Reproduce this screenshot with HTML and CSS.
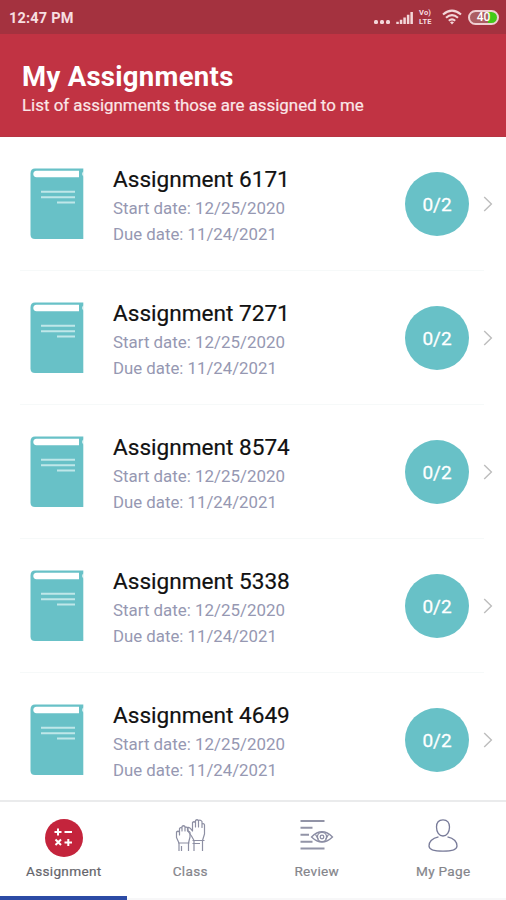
FILE: index.html
```html
<!DOCTYPE html>
<html lang="en">
<head>
<meta charset="utf-8">
<title>My Assignments</title>
<link rel="stylesheet" href="styles.css">
</head>
<body>
<svg class="defs" aria-hidden="true">
  <symbol id="book" viewBox="0 0 54 72">
    <path fill="#68c1c7" d="M5 .5H53.300V71H5Q.5 71 .5 66.500V5.500Q.5 .5 5 .5Z"/>
    <path fill="#fff" d="M6.500 2.800H49V9.300H6.500Q3.300 9 3.300 6T6.500 2.800ZM53.500 3.300V8.700Q51 6 53.500 3.300Z"/>
    <path stroke="#bfe7e9" stroke-width="2" d="M11 23.700H45M11 29.200H45M27 34.600H45"/>
  </symbol>
  <symbol id="chevron" viewBox="0 0 10 16"><path fill="none" stroke="#bdbdbd" stroke-width="1.400" d="M1.200 1 8.400 8 1.200 15"/></symbol>
</svg>
<div class="app">
  <div class="status">
    <span class="clock">12:47 PM</span>
    <span class="dots"><i></i><i></i><i></i></span>
    <svg class="signal" viewBox="0 0 19 14"><path stroke="#f3d7da" stroke-width="2.700" d="M2 14V11.500M5.800 14V9.500M9.600 14V7M13.400 14V4M17.200 14V1"/></svg>
    <span class="lte"><span>Vo)</span><span>LTE</span></span>
    <svg class="wifi" viewBox="0 0 20 16"><g fill="none" stroke="#f3d7da" stroke-width="2.100"><path d="M1 5.500Q10-2.200 19 5.500M4 8.700Q10 3.500 16 8.700M6.800 11.800Q10 9.100 13.200 11.800"/></g><path fill="#f3d7da" d="M8 13.200Q10 12 12 13.200L10 15.500Z"/></svg>
    <span class="battery">40</span>
  </div>
  <header class="header">
    <h1>My Assignments</h1>
    <p>List of assignments those are assigned to me</p>
  </header>
  <ul class="list">
    <li class="row"><svg class="book"><use href="#book"/></svg><div class="info"><h2>Assignment 6171</h2><p class="start">Start date: 12/25/2020</p><p class="due">Due date: 11/24/2021</p></div><span class="count">0/2</span><svg class="chevron"><use href="#chevron"/></svg></li>
    <li class="row"><svg class="book"><use href="#book"/></svg><div class="info"><h2>Assignment 7271</h2><p class="start">Start date: 12/25/2020</p><p class="due">Due date: 11/24/2021</p></div><span class="count">0/2</span><svg class="chevron"><use href="#chevron"/></svg></li>
    <li class="row"><svg class="book"><use href="#book"/></svg><div class="info"><h2>Assignment 8574</h2><p class="start">Start date: 12/25/2020</p><p class="due">Due date: 11/24/2021</p></div><span class="count">0/2</span><svg class="chevron"><use href="#chevron"/></svg></li>
    <li class="row"><svg class="book"><use href="#book"/></svg><div class="info"><h2>Assignment 5338</h2><p class="start">Start date: 12/25/2020</p><p class="due">Due date: 11/24/2021</p></div><span class="count">0/2</span><svg class="chevron"><use href="#chevron"/></svg></li>
    <li class="row"><svg class="book"><use href="#book"/></svg><div class="info"><h2>Assignment 4649</h2><p class="start">Start date: 12/25/2020</p><p class="due">Due date: 11/24/2021</p></div><span class="count">0/2</span><svg class="chevron"><use href="#chevron"/></svg></li>
  </ul>
  <nav class="tabs">
    <a class="tab active">
      <svg viewBox="0 0 38 38"><circle cx="19" cy="19" r="19" fill="#c4243c"/><path stroke="#fff" stroke-width="2" d="M9.500 13H16.500M13 9.500V16.500M19.500 13H27M19.500 23.500H27M23.300 20V27M10.500 20.500 16 26M16 20.500 10.500 26"/></svg>
      <span>Assignment</span>
    </a>
    <a class="tab">
      <svg viewBox="0 0 38 38"><g fill="none" stroke="#8d8fa3" stroke-width="1.200" stroke-linejoin="round"><path d="M8 32V24L5.500 18.500V13Q7 11.500 8.500 13V16V9.500Q9.500 8 11 9V12V7.500Q12.500 6 14 7.500V12V8.500Q15.500 7.500 17 9V12.500Q18.500 12 19 13.500V18L17.500 24V32M7 24H18.500M10.500 27V32"/><path d="M23 32V21.500L20.500 17L16.500 11.500V8.500Q18.500 7.500 21.500 12V3.500Q23 2 24.500 3.500V8V1.500Q26 0 27.500 1.500V8V1.500Q29.500 .5 31 2.500V8.500V5Q33 4 33.500 6V15L31.500 21.500V32M21.500 21.500H33.500M21.500 24.500H29"/></g></svg>
      <span>Class</span>
    </a>
    <a class="tab">
      <svg viewBox="0 0 38 38"><path stroke="#9294a7" stroke-width="2" d="M2.500 2H26.500M2.500 8.700H14.500M2.500 15.700H11M2.500 22.800H14.500M2.500 29.600H26.500"/><g fill="none" stroke="#8b8da4" stroke-width="1.300"><path d="M13.500 18Q24 7.500 34.500 18Q24 28 13.500 18Z"/><circle cx="24" cy="18" r="4.600"/><circle cx="24" cy="18" r="1.800"/><path d="M17.500 15.500 20.500 20.500M30.500 15.500 27.500 20.500"/></g></svg>
      <span>Review</span>
    </a>
    <a class="tab">
      <svg viewBox="0 0 38 38"><path fill="none" stroke="#787b99" stroke-width="1.300" d="M19 .8C14.500 .8 12.500 4 12.500 8C12.500 13 15 17 19 17S25.500 13 25.500 8C25.500 4 23.500 .8 19 .8ZM14.500 17.800Q5 20 5 27Q5 32.200 19 32.200T33 27Q33 20 23.500 17.800"/></svg>
      <span>My Page</span>
    </a>
  </nav>
</div>
</body>
</html>
```
FILE: styles.css
```css
* { box-sizing: border-box; margin: 0; padding: 0; }
body { font-family: Roboto, "Liberation Sans", sans-serif; background: #fff; }
.defs { display: none; }
.app { width: 506px; height: 900px; display: flex; flex-direction: column; overflow: hidden; }
.status { height: 34px; flex: none; background: #a4323f; color: #f7dfe1; display: flex; align-items: center; padding: 0 7px 0 9px; }
.clock { font-size: 14.500px; font-weight: 700; letter-spacing: .2px; flex: 1; padding-top: 2px; }
.dots { display: flex; gap: 2px; padding-top: 9px; margin-right: 5px; }
.dots i { width: 4px; height: 4px; border-radius: 1.500px; background: #f3d7da; }
.signal { width: 19px; height: 13px; margin-right: 5px; }
.lte { display: flex; flex-direction: column; gap: 1px; font-size: 7.500px; line-height: 8px; font-weight: 700; letter-spacing: .2px; width: 17px; margin-right: 6px; }
.wifi { width: 20px; height: 16px; margin-right: 6px; }
.battery { width: 31px; height: 15px; border: 2px solid #f0cfd2; border-radius: 8px; background: linear-gradient(90deg, #ac5d62 65%, #43c918 65%); color: #fff; font-size: 12px; font-weight: 500; line-height: 11px; text-align: center; }
.header { height: 103px; flex: none; background: #c13343; padding: 26px 22px 0; border-bottom: 1px solid #b63543; }
.header h1 { color: #fff; font-size: 27.500px; line-height: 34px; font-weight: 700; letter-spacing: .3px; }
.header p { color: #fbe7e8; font-size: 16.900px; line-height: 22px; -webkit-text-stroke: .2px #fbe7e8; }
.list { list-style: none; flex: 1; min-height: 0; overflow: hidden; }
.row { position: relative; height: 134.100px; display: flex; padding-left: 30px; }
.row::after { content: ""; position: absolute; left: 20px; right: 22px; bottom: 0; height: 1px; background: #f6f9f9; }
.book { width: 54px; height: 72px; margin: 31px 29px 0 0; }
.info { width: 292px; padding-top: 29px; }
.info h2 { color: #111; font-size: 22.600px; line-height: 28px; font-weight: 400; -webkit-text-stroke: .2px #111; }
.info p { color: #9698b2; font-size: 16.900px; line-height: 26px; }
.info .start { margin-top: 1px; }
.info .due { font-size: 16.800px; line-height: 27px; }
.count { width: 64px; height: 64px; margin-top: 35px; border-radius: 50%; background: #68c1c7; color: #fff; font-size: 19px; line-height: 65px; text-align: center; -webkit-text-stroke: .3px #fff; }
.chevron { width: 10px; height: 16px; margin: 59px 0 0 14px; }
.tabs { height: 100px; flex: none; display: grid; grid-template-columns: repeat(4, 1fr); border-top: 2px solid #eaebec; }
.tab { display: flex; flex-direction: column; align-items: center; padding: 17px 0 0 1px; color: #85858b; font-size: 13.600px; letter-spacing: .3px; -webkit-text-stroke: .2px currentColor; border-bottom: 2px solid #f7f7f8; }
.tab svg { width: 38px; height: 38px; }
.tab span { line-height: 18px; margin-top: 5px; }
.active { color: #65656b; border-bottom: 4px solid #2c4ba5; }
```
